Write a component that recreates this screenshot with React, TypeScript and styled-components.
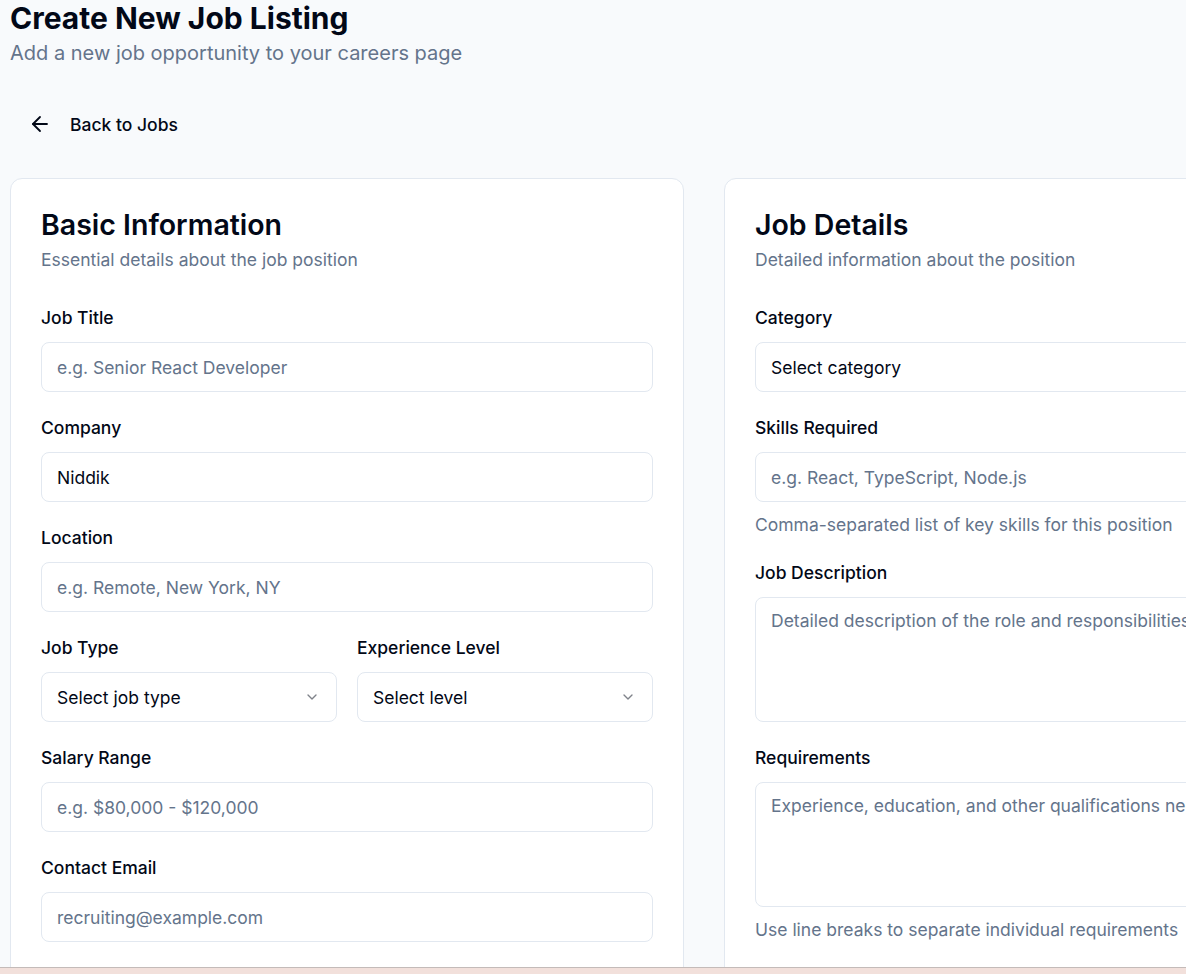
import styled, { createGlobalStyle } from "styled-components";
import { ArrowLeft, ChevronDown } from "lucide-react";

const GlobalStyle = createGlobalStyle`
  html, body {
    margin: 0;
    padding: 0;
    overflow: hidden;
    background: #f8fafc;
    font-family: Inter, "Noto Sans", "Liberation Sans", sans-serif;
    color: #020817;
  }
  * {
    box-sizing: border-box;
  }
`;

type FieldDef = {
  label: string;
  placeholder?: string;
  value?: string;
  help?: string;
};

function Field({ label, placeholder, value, help }: FieldDef) {
  return (
    <FieldBox>
      <Label>{label}</Label>
      <Input placeholder={placeholder} defaultValue={value} readOnly />
      {help && <Help>{help}</Help>}
    </FieldBox>
  );
}

function SelectField({ label, text }: { label: string; text: string }) {
  return (
    <FieldBox>
      <Label>{label}</Label>
      <SelectBox>
        <span>{text}</span>
        <ChevronDown size={16} strokeWidth={2} />
      </SelectBox>
    </FieldBox>
  );
}

function AreaField({ label, placeholder, help }: FieldDef) {
  return (
    <FieldBox>
      <Label>{label}</Label>
      <TextArea placeholder={placeholder} readOnly />
      {help && <Help>{help}</Help>}
    </FieldBox>
  );
}

export default function App() {
  return (
    <>
      <GlobalStyle />
      <Page>
        <PageHeader>
          <Title>Create New Job Listing</Title>
          <Subtitle>Add a new job opportunity to your careers page</Subtitle>
        </PageHeader>

        <BackButton>
          <ArrowLeft size={24} strokeWidth={1.8} />
          Back to Jobs
        </BackButton>

        <Columns>
          <Card>
            <CardHeader>
              <CardTitle>Basic Information</CardTitle>
              <CardDesc>Essential details about the job position</CardDesc>
            </CardHeader>
            <Form>
              <Field label="Job Title" placeholder="e.g. Senior React Developer" />
              <Field label="Company" value="Niddik" />
              <Field label="Location" placeholder="e.g. Remote, New York, NY" />
              <Pair>
                <SelectField label="Job Type" text="Select job type" />
                <SelectField label="Experience Level" text="Select level" />
              </Pair>
              <Field label="Salary Range" placeholder="e.g. $80,000 - $120,000" />
              <Field label="Contact Email" placeholder="recruiting@example.com" />
            </Form>
          </Card>

          <Card>
            <CardHeader>
              <CardTitle>Job Details</CardTitle>
              <CardDesc>Detailed information about the position</CardDesc>
            </CardHeader>
            <Form>
              <SelectField label="Category" text="Select category" />
              <Field
                label="Skills Required"
                placeholder="e.g. React, TypeScript, Node.js"
                help="Comma-separated list of key skills for this position"
              />
              <AreaField
                label="Job Description"
                placeholder="Detailed description of the role and responsibilities..."
              />
              <AreaField
                label="Requirements"
                placeholder="Experience, education, and other qualifications needed..."
                help="Use line breaks to separate individual requirements"
              />
            </Form>
          </Card>
        </Columns>
      </Page>
      <BottomStrip />
    </>
  );
}

const Page = styled.div`
  width: 1420px;
  padding: 0 10px 40px;
`;

const PageHeader = styled.header`
  display: flex;
  flex-direction: column;
  gap: 3px;
`;

const Title = styled.h1`
  margin: 0;
  font-size: 30px;
  line-height: 36px;
  font-weight: 700;
  color: #020817;
`;

const Subtitle = styled.p`
  margin: 0;
  font-size: 20px;
  line-height: 28px;
  color: #64748b;
`;

const BackButton = styled.button`
  display: flex;
  align-items: center;
  gap: 18px;
  height: 40px;
  margin-top: 37px;
  padding: 0 18px;
  border: none;
  border-radius: 6px;
  background: transparent;
  font-family: inherit;
  font-size: 17.5px;
  font-weight: 500;
  color: #020817;
  cursor: pointer;
`;

const Columns = styled.div`
  display: grid;
  grid-template-columns: 674px 674px;
  gap: 40px;
  margin-top: 34px;
`;

const Card = styled.section`
  background: #ffffff;
  border: 1px solid #e2e8f0;
  border-radius: 12px;
  padding: 28px 30px 30px;
  min-height: 900px;
`;

const CardHeader = styled.div`
  display: flex;
  flex-direction: column;
  gap: 5px;
  margin-bottom: 34px;
`;

const CardTitle = styled.h2`
  margin: 0;
  font-size: 28.5px;
  line-height: 36px;
  font-weight: 600;
  color: #020817;
`;

const CardDesc = styled.p`
  margin: 0;
  font-size: 17.5px;
  line-height: 24px;
  color: #64748b;
`;

const Form = styled.div`
  display: flex;
  flex-direction: column;
  gap: 24px;
`;

const Pair = styled.div`
  display: grid;
  grid-template-columns: 1fr 1fr;
  gap: 20px;
`;

const FieldBox = styled.div`
  display: flex;
  flex-direction: column;
  gap: 12px;
`;

const Label = styled.label`
  font-size: 17.5px;
  line-height: 24px;
  font-weight: 500;
  color: #020817;
`;

const Input = styled.input`
  height: 50px;
  width: 100%;
  padding: 0 15px;
  border: 1px solid #e2e8f0;
  border-radius: 8px;
  background: #ffffff;
  font-family: inherit;
  font-size: 17.5px;
  color: #020817;
  outline: none;

  &::placeholder {
    color: #64748b;
  }
`;

const SelectBox = styled.div`
  display: flex;
  align-items: center;
  justify-content: space-between;
  height: 50px;
  padding: 0 16px 0 15px;
  border: 1px solid #e2e8f0;
  border-radius: 8px;
  background: #ffffff;
  font-size: 17.5px;
  color: #020817;

  svg {
    color: #020817;
    opacity: 0.5;
  }
`;

const TextArea = styled.textarea`
  height: 125px;
  width: 100%;
  padding: 11px 15px;
  border: 1px solid #e2e8f0;
  border-radius: 8px;
  background: #ffffff;
  font-family: inherit;
  font-size: 17.5px;
  line-height: 24px;
  color: #020817;
  resize: none;
  outline: none;
  white-space: nowrap;
  overflow: hidden;

  &::placeholder {
    color: #64748b;
  }
`;

const Help = styled.p`
  margin: -1px 0 0;
  font-size: 17.5px;
  line-height: 24px;
  color: #64748b;
`;

const BottomStrip = styled.div`
  position: fixed;
  left: 0;
  right: 0;
  bottom: 0;
  height: 7px;
  background: #f2e0db;
  border-top: 1px solid #c4bbb9;
`;
